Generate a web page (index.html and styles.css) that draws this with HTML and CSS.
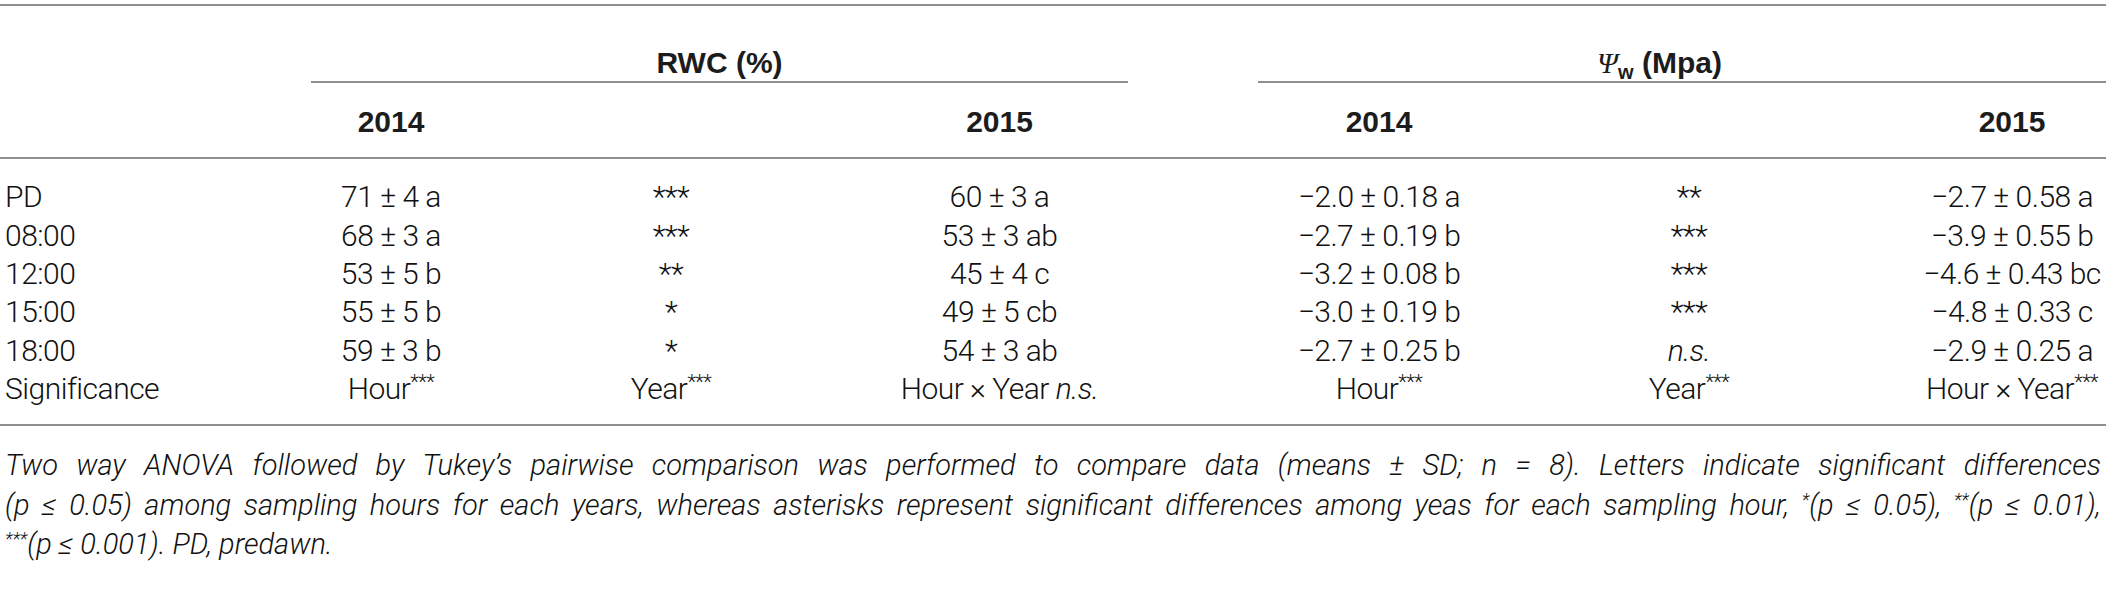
FILE: index.html
```html
<!DOCTYPE html>
<html lang="en">
<head>
    <meta charset="UTF-8">
    <meta name="viewport" content="width=device-width, initial-scale=1.0">
    <title>RWC and water potential</title>
    <link rel="stylesheet" href="styles.css">
</head>
<body>
    <div class="container">
        <table class="data-table">
            <colgroup>
                <col class="w-label">
                <col class="w-rwc14">
                <col class="w-rwcsig">
                <col class="w-rwc15">
                <col class="w-psi14">
                <col class="w-psisig">
                <col class="w-psi15">
            </colgroup>
            <thead>
                <tr class="group-row">
                    <th></th>
                    <th colspan="3" class="group"><div class="group-label">RWC (%)</div></th>
                    <th colspan="3" class="group psi"><div class="group-label"><i class="psi-sym">&Psi;</i><sub>w</sub> (Mpa)</div></th>
                </tr>
                <tr class="year-row">
                    <th></th>
                    <th>2014</th>
                    <th></th>
                    <th>2015</th>
                    <th class="psi">2014</th>
                    <th></th>
                    <th class="last">2015</th>
                </tr>
            </thead>
            <tbody>
                <tr>
                    <td class="label">PD</td>
                    <td>71 &plusmn; 4 a</td>
                    <td>***</td>
                    <td>60 &plusmn; 3 a</td>
                    <td class="psi">&minus;2.0 &plusmn; 0.18 a</td>
                    <td>**</td>
                    <td class="last">&minus;2.7 &plusmn; 0.58 a</td>
                </tr>
                <tr>
                    <td class="label">08:00</td>
                    <td>68 &plusmn; 3 a</td>
                    <td>***</td>
                    <td>53 &plusmn; 3 ab</td>
                    <td class="psi">&minus;2.7 &plusmn; 0.19 b</td>
                    <td>***</td>
                    <td class="last">&minus;3.9 &plusmn; 0.55 b</td>
                </tr>
                <tr>
                    <td class="label">12:00</td>
                    <td>53 &plusmn; 5 b</td>
                    <td>**</td>
                    <td>45 &plusmn; 4 c</td>
                    <td class="psi">&minus;3.2 &plusmn; 0.08 b</td>
                    <td>***</td>
                    <td class="last">&minus;4.6 &plusmn; 0.43 bc</td>
                </tr>
                <tr>
                    <td class="label">15:00</td>
                    <td>55 &plusmn; 5 b</td>
                    <td>*</td>
                    <td>49 &plusmn; 5 cb</td>
                    <td class="psi">&minus;3.0 &plusmn; 0.19 b</td>
                    <td>***</td>
                    <td class="last">&minus;4.8 &plusmn; 0.33 c</td>
                </tr>
                <tr>
                    <td class="label">18:00</td>
                    <td>59 &plusmn; 3 b</td>
                    <td>*</td>
                    <td>54 &plusmn; 3 ab</td>
                    <td class="psi">&minus;2.7 &plusmn; 0.25 b</td>
                    <td><i>n.s.</i></td>
                    <td class="last">&minus;2.9 &plusmn; 0.25 a</td>
                </tr>
                <tr>
                    <td class="label">Significance</td>
                    <td>Hour<sup>***</sup></td>
                    <td>Year<sup>***</sup></td>
                    <td>Hour &times; Year <i>n.s.</i></td>
                    <td class="psi">Hour<sup>***</sup></td>
                    <td>Year<sup>***</sup></td>
                    <td class="last">Hour &times; Year<sup>***</sup></td>
                </tr>
            </tbody>
        </table>
        <p class="note">
            <span class="note-line">Two way ANOVA followed by Tukey&rsquo;s pairwise comparison was performed to compare data (means &plusmn; SD; n = 8). Letters indicate significant differences</span>
            <span class="note-line">(p &le; 0.05) among sampling hours for each years, whereas asterisks represent significant differences among yeas for each sampling hour, <sup>*</sup>(p &le; 0.05), <sup>**</sup>(p &le; 0.01),</span>
            <span class="note-line end"><sup>***</sup>(p &le; 0.001). PD, predawn.</span>
        </p>
    </div>
</body>
</html>
```

FILE: styles.css
```css
body { margin: 0; font-family: Roboto, "Liberation Sans", Arial, sans-serif; font-weight: 300; color: #111; background: #fff; }
.container { width: 2106px; padding-top: 4px; }

.data-table { width: 2106px; table-layout: fixed; border-collapse: collapse; border-top: 2px solid #8f8f8f; border-bottom: 2px solid #8f8f8f; font-size: 30px; line-height: 36px; }
.w-label { width: 311px; }
.w-rwc14 { width: 160px; }
.w-rwcsig { width: 400px; }
.w-rwc15 { width: 257px; }
.w-psi14 { width: 372px; }
.w-psisig { width: 378px; }
.w-psi15 { width: 228px; }

th { font-family: "Liberation Sans", Arial, sans-serif; font-weight: 700; color: #1c1c1c; text-align: center; white-space: nowrap; }
td { text-align: center; white-space: nowrap; padding: 1.2px 0; letter-spacing: -0.5px; }

.group-row th { padding: 0; vertical-align: bottom; }
.group-label { padding: 39px 0 0; border-bottom: 2px solid #8f8f8f; }
.group.psi .group-label { padding-right: 45px; }
.psi-sym { font-family: "Liberation Serif", serif; font-weight: 400; }
.group-label sub { font-size: 20px; line-height: 0; vertical-align: -6px; }

.year-row th { padding: 21px 0 17px; border-bottom: 2px solid #8f8f8f; }

th.psi, td.psi { padding-left: 130px; }
th.last, td.last { padding-left: 40px; }

td.label { text-align: left; padding-left: 5px; }
tbody tr:first-child td { padding-top: 20.3px; }
tbody tr:last-child td { padding-bottom: 17px; }

sup { font-size: 20px; line-height: 0; vertical-align: 10px; }

.note { width: 2096px; margin: 20px 0 0; padding: 0 5px; font-size: 29px; line-height: 39.5px; font-style: italic; }
.note-line { display: block; text-align: justify; text-align-last: justify; }
.note-line.end { text-align-last: left; }
.note sup { font-size: 18px; vertical-align: 9px; }
```
